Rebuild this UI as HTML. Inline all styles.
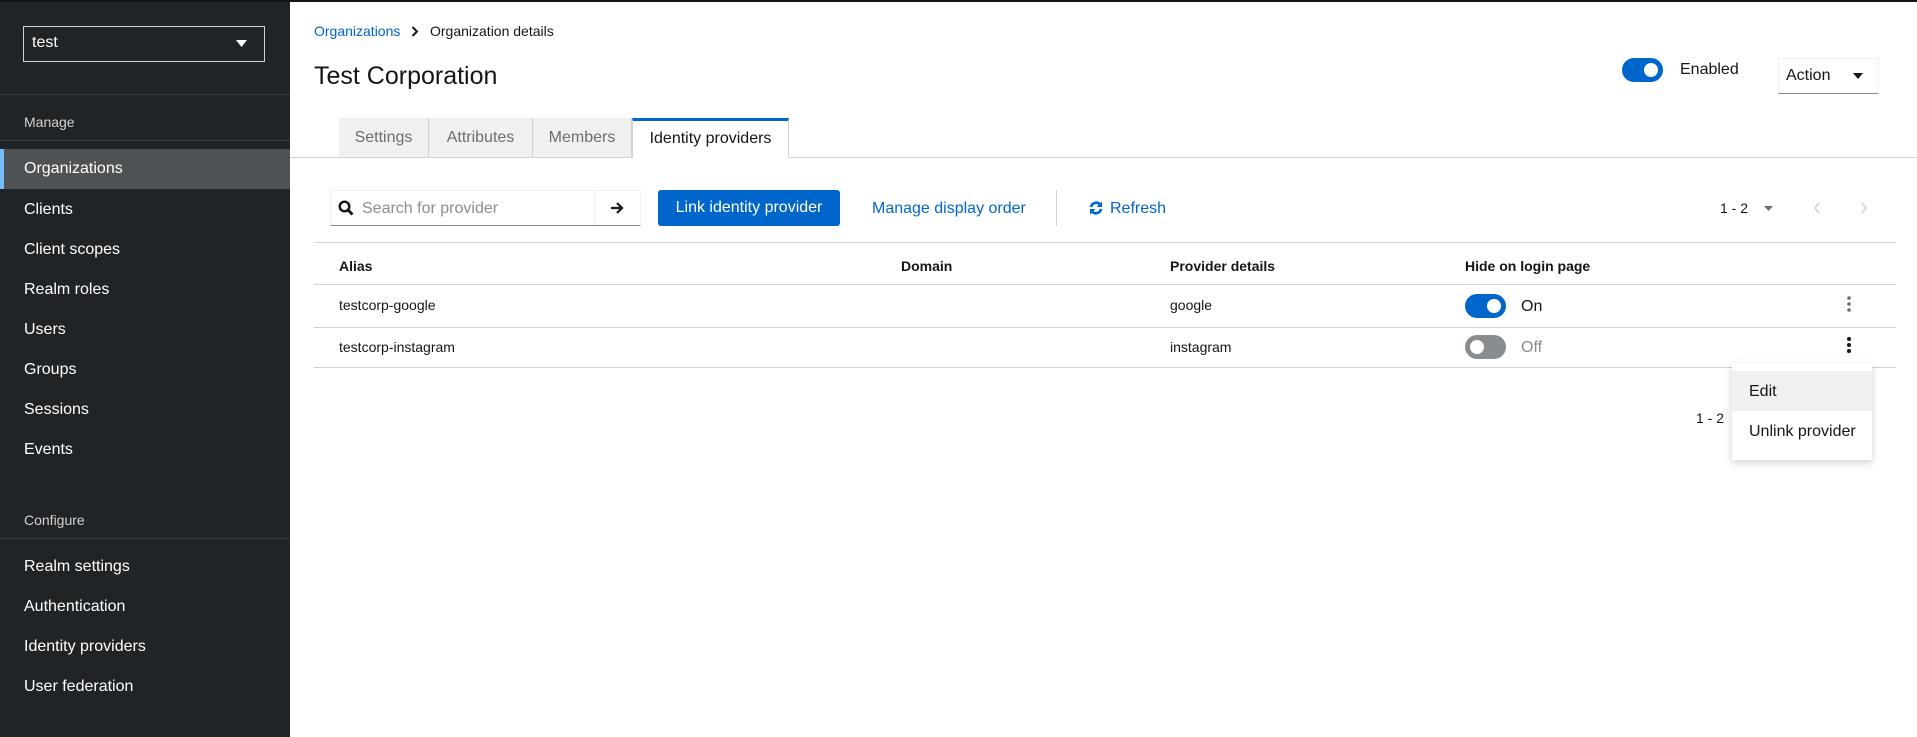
<!DOCTYPE html>
<html><head><meta charset="utf-8"><style>
*{box-sizing:border-box;margin:0;padding:0}
body{width:1917px;height:737px;overflow:hidden;font-family:"Liberation Sans",sans-serif;color:#151515;background:#fff;position:relative}
.a{position:absolute;white-space:nowrap}
#top{left:0;top:0;width:1917px;height:2px;background:#151515}
#side{left:0;top:2px;width:290px;height:735px;background:#212427}
.nav{color:#fff;font-size:16px;left:24px}
.lbl{color:#d2d2d2;font-size:14px;left:24px}
.div{left:0;width:290px;height:1px;background:#3c3f42}
.tab{top:118px;height:39px;background:#f0f0f0;color:#6a6e73;font-size:16px;line-height:39px;text-align:center;border-right:1px solid #d2d2d2}
.hd{font-size:14px;font-weight:bold;top:258px}
.td{font-size:14px}
.hl{left:314px;width:1582px;height:1px;background:#d2d2d2}
.sw{width:41px;height:24px;border-radius:12px}
.sw i{position:absolute;top:5px;width:14px;height:14px;border-radius:7px;background:#fff}
</style></head><body>
<div class="a" id="top"></div>
<div class="a" id="side"></div>
<div class="a" style="left:23px;top:26px;width:242px;height:36px;border:1px solid #d2d2d2"></div>
<div class="a nav" style="left:32px;top:34px">test</div>
<svg class="a" style="left:236px;top:40px" width="12" height="8"><path d="M0 0H11L5.5 7Z" fill="#fff"/></svg>
<div class="a div" style="top:94px"></div>
<div class="a lbl" style="top:114px">Manage</div>
<div class="a div" style="top:140px"></div>
<div class="a" style="left:0;top:149px;width:290px;height:40px;background:#4f5255"></div>
<div class="a" style="left:0;top:149px;width:4px;height:40px;background:#73bcf7"></div>
<div class="a nav" style="top:160px">Organizations</div>
<div class="a nav" style="top:201px">Clients</div>
<div class="a nav" style="top:241px">Client scopes</div>
<div class="a nav" style="top:281px">Realm roles</div>
<div class="a nav" style="top:321px">Users</div>
<div class="a nav" style="top:361px">Groups</div>
<div class="a nav" style="top:401px">Sessions</div>
<div class="a nav" style="top:441px">Events</div>
<div class="a lbl" style="top:512px">Configure</div>
<div class="a div" style="top:538px"></div>
<div class="a nav" style="top:558px">Realm settings</div>
<div class="a nav" style="top:598px">Authentication</div>
<div class="a nav" style="top:638px">Identity providers</div>
<div class="a nav" style="top:678px">User federation</div>

<div class="a" style="left:314px;top:23px;font-size:14px;color:#06c">Organizations</div>
<svg class="a" style="left:411px;top:26px" width="8" height="11"><path d="M1.5 1L6 5.5L1.5 10" stroke="#151515" stroke-width="2" fill="none"/></svg>
<div class="a" style="left:430px;top:23px;font-size:14px">Organization details</div>
<div class="a" style="left:314px;top:62px;font-size:25px">Test Corporation</div>

<div class="a sw" style="left:1622px;top:58px;background:#06c"><i style="left:22px"></i></div>
<div class="a" style="left:1680px;top:61px;font-size:16px">Enabled</div>
<div class="a" style="left:1778px;top:58px;width:101px;height:36px;border:1px solid #f0f0f0;border-bottom-color:#8a8d90"></div>
<div class="a" style="left:1786px;top:67px;font-size:16px">Action</div>
<svg class="a" style="left:1853px;top:73px" width="11" height="7"><path d="M0 0H10L5 6Z" fill="#151515"/></svg>

<div class="a" style="left:290px;top:157px;width:1627px;height:1px;background:#d2d2d2"></div>
<div class="a tab" style="left:339px;width:90px">Settings</div>
<div class="a tab" style="left:429px;width:104px">Attributes</div>
<div class="a tab" style="left:533px;width:99px">Members</div>
<div class="a tab" style="left:632px;width:157px;background:#fff;color:#151515;border-top:3px solid #06c;border-left:1px solid #d2d2d2;border-right:1px solid #d2d2d2;height:40px;line-height:36px">Identity providers</div>

<div class="a" style="left:330px;top:190px;width:311px;height:36px;border:1px solid #f0f0f0;border-bottom-color:#8a8d90"></div>
<div class="a" style="left:594px;top:190px;width:1px;height:35px;background:#f0f0f0"></div>
<svg class="a" style="left:338px;top:200px" width="16" height="16"><circle cx="6.5" cy="6.5" r="4.8" stroke="#151515" stroke-width="2.4" fill="none"/><path d="M10 10L14.5 14.5" stroke="#151515" stroke-width="2.8"/></svg>
<div class="a" style="left:362px;top:200px;font-size:16px;color:#8a8d90">Search for provider</div>
<svg class="a" style="left:610px;top:201px" width="14" height="14"><path d="M1 7H12M7 2L12 7L7 12" stroke="#151515" stroke-width="2.2" fill="none"/></svg>
<div class="a" style="left:658px;top:190px;width:182px;height:36px;background:#06c;border-radius:3px;color:#fff;font-size:16px;text-align:center;line-height:36px">Link identity provider</div>
<div class="a" style="left:872px;top:200px;font-size:16px;color:#06c">Manage display order</div>
<div class="a" style="left:1056px;top:190px;width:1px;height:36px;background:#d2d2d2"></div>
<svg class="a" style="left:1089px;top:201px" width="14" height="14"><path d="M2 6A5.2 5.2 0 0 1 11 3.5M12 8A5.2 5.2 0 0 1 3 10.5" stroke="#06c" stroke-width="2.6" fill="none"/><path d="M13 0.5V6H7.5ZM1 13.5V8H6.5Z" fill="#06c"/></svg>
<div class="a" style="left:1110px;top:200px;font-size:16px;color:#06c">Refresh</div>
<div class="a" style="left:1720px;top:200px;font-size:14px">1 - 2</div>
<svg class="a" style="left:1764px;top:206px" width="10" height="6"><path d="M0 0H9L4.5 5Z" fill="#6a6e73"/></svg>
<svg class="a" style="left:1813px;top:202px" width="8" height="12"><path d="M6 1L2 6L6 11" stroke="#d2d2d2" stroke-width="1.6" fill="none"/></svg>
<svg class="a" style="left:1860px;top:202px" width="8" height="12"><path d="M2 1L6 6L2 11" stroke="#d2d2d2" stroke-width="1.6" fill="none"/></svg>

<div class="a hl" style="top:242px"></div>
<div class="a hd" style="left:339px">Alias</div>
<div class="a hd" style="left:901px">Domain</div>
<div class="a hd" style="left:1170px">Provider details</div>
<div class="a hd" style="left:1465px">Hide on login page</div>
<div class="a hl" style="top:284px"></div>
<div class="a td" style="left:339px;top:297px">testcorp-google</div>
<div class="a td" style="left:1170px;top:297px">google</div>
<div class="a sw" style="left:1465px;top:294px;background:#06c"><i style="left:22px"></i></div>
<div class="a" style="left:1521px;top:298px;font-size:16px">On</div>
<svg class="a" style="left:1846px;top:295px" width="6" height="18"><circle cx="3" cy="3" r="1.8" fill="#6a6e73"/><circle cx="3" cy="9" r="1.8" fill="#6a6e73"/><circle cx="3" cy="15" r="1.8" fill="#6a6e73"/></svg>
<div class="a hl" style="top:327px"></div>
<div class="a td" style="left:339px;top:339px">testcorp-instagram</div>
<div class="a td" style="left:1170px;top:339px">instagram</div>
<div class="a sw" style="left:1465px;top:335px;background:#8a8d90"><i style="left:5px"></i></div>
<div class="a" style="left:1521px;top:339px;font-size:16px;color:#8a8d90">Off</div>
<svg class="a" style="left:1846px;top:336px" width="6" height="18"><circle cx="3" cy="3" r="2" fill="#151515"/><circle cx="3" cy="9" r="2" fill="#151515"/><circle cx="3" cy="15" r="2" fill="#151515"/></svg>
<div class="a hl" style="top:367px"></div>

<div class="a" style="left:1696px;top:410px;font-size:14px">1 - 2</div>
<div class="a" style="left:1732px;top:363px;width:140px;height:97px;background:#fff;box-shadow:0 3px 8px rgba(3,3,3,.18)"></div>
<div class="a" style="left:1732px;top:371px;width:140px;height:40px;background:#f0f0f0"></div>
<div class="a" style="left:1749px;top:383px;font-size:16px">Edit</div>
<div class="a" style="left:1749px;top:423px;font-size:16px">Unlink provider</div>
</body></html>
